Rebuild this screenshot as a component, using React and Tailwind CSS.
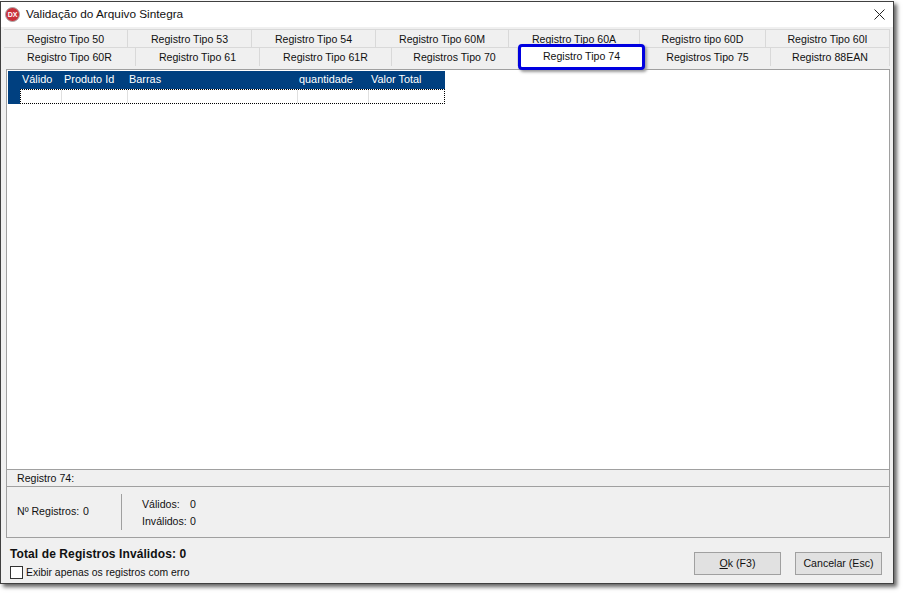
const font = { fontFamily: '"Liberation Sans", Arial, sans-serif' };

const rowOne = [
  ["Registro Tipo 50", 124],
  ["Registro Tipo 53", 124],
  ["Registro Tipo 54", 124],
  ["Registro Tipo 60M", 133],
  ["Registro Tipo 60A", 131],
  ["Registro tipo 60D", 126],
  ["Registro Tipo 60I", 124],
];

const rowTwo = [
  ["Registro Tipo 60R", 132],
  ["Registro Tipo 61", 124],
  ["Registro Tipo 61R", 132],
  ["Registros Tipo 70", 126],
  ["Registro Tipo 74", 127, true],
  ["Registros Tipo 75", 126],
  ["Registro 88EAN", 119],
];

const columns = [
  ["Válido", "w-[42px]"],
  ["Produto Id", "w-[65px]"],
  ["Barras", "w-[170px]"],
  ["quantidade", "w-[72px]"],
  ["Valor Total", "w-[74px]"],
];

function Tab({ label, width, selected }) {
  if (selected) {
    return (
      <div
        className="relative z-10 -mt-[3px] h-[26px] shrink-0 rounded-[4px] border-[3px] border-[#0000e0] bg-white pt-[2px] text-center leading-[14px] shadow-[2px_2px_3px_#999]"
        style={{ width }}
      >
        {label}
      </div>
    );
  }
  return (
    <div
      className="h-[19px] shrink-0 border-t border-r border-[#d9d9d9] text-center leading-[18px]"
      style={{ width }}
    >
      {label}
    </div>
  );
}

export default function App() {
  return (
    <div className="h-[594px] w-[904px] overflow-hidden bg-white pt-[1px] text-[10.6px] text-[#111]" style={font}>
      <div className="flex h-[583px] w-[894px] flex-col border border-[#404040] shadow-[3px_3px_4px_#666]">
        <div className="flex h-[25px] shrink-0 items-center bg-white pl-[4px] pr-[8px]">
          <svg width="15" height="15" viewBox="0 0 15 15">
            <circle cx="7.5" cy="7.5" r="7" fill="#c9303a" stroke="#a9a9a9" />
            <text x="7.5" y="10" textAnchor="middle" fontSize="7" fontWeight="700" fill="#fff">DX</text>
          </svg>
          <span className="ml-[6px] text-[11.8px]">Validação do Arquivo Sintegra</span>
          <svg className="ml-auto" width="11" height="11" viewBox="0 0 11 11">
            <path d="M0.5 0.5 L10.5 10.5 M10.5 0.5 L0.5 10.5" stroke="#222" strokeWidth="1" fill="none" />
          </svg>
        </div>

        <div className="flex min-h-0 flex-1 flex-col bg-[#f0f0f0] pl-[3px] pr-[3px]">
          <div className="mt-[2px] flex h-[18px] shrink-0">
            {rowOne.map(([label, width]) => (
              <Tab key={label} label={label} width={width} />
            ))}
          </div>
          <div className="flex h-[19px] shrink-0">
            {rowTwo.map(([label, width, selected]) => (
              <Tab key={label} label={label} width={width} selected={selected} />
            ))}
          </div>

          <div className="ml-[2px] mt-[3px] flex h-[469px] w-[884px] shrink-0 flex-col border border-[#a0a0a0]">
            <div className="min-h-0 flex-1 bg-white pl-[1px] pt-[1px]">
              <div className="w-[437px]">
                <div className="flex h-[18px] items-center bg-[#004080] pb-[2px] pl-[14px] text-[10.9px] text-white">
                  {columns.map(([label, width]) => (
                    <span key={label} className={width}>{label}</span>
                  ))}
                </div>
                <div className="flex h-[15px] bg-[#004080]">
                  <div className="w-[12px]" />
                  <div className="flex flex-1 border border-dotted border-black bg-white">
                    <div className="w-[41px] border-r border-[#e0e0e0]" />
                    <div className="w-[66px] border-r border-[#e0e0e0]" />
                    <div className="w-[170px] border-r border-[#e0e0e0]" />
                    <div className="w-[71px] border-r border-[#e0e0e0]" />
                  </div>
                </div>
              </div>
            </div>

            <div className="h-[18px] shrink-0 border-y border-[#a0a0a0] bg-[#f0f0f0] pl-[10px] leading-[17px]">Registro 74:</div>

            <div className="flex h-[50px] shrink-0 items-center bg-[#f0f0f0] pl-[10px]">
              <span className="w-[66px]">Nº Registros:</span>
              <span className="w-[38px]">0</span>
              <div className="h-[36px] w-px bg-[#a0a0a0]" />
              <div className="ml-[20px] flex flex-col gap-[3px] leading-[14px]">
                <div className="flex"><span className="w-[48px]">Válidos:</span><span>0</span></div>
                <div className="flex"><span className="w-[48px]">Inválidos:</span><span>0</span></div>
              </div>
            </div>
          </div>

          <div className="flex min-h-0 flex-1 items-start justify-between pl-[6px] pr-[8px]">
            <div className="flex flex-col gap-[4px] pt-[9px]">
              <span className="text-[12px] font-bold leading-[14px] tracking-[0.1px]">Total de Registros Inválidos: 0</span>
              <label className="flex items-center gap-[3px] text-[10.4px]">
                <span className="h-[13px] w-[13px] border border-[#333] bg-white" />
                <span>Exibir apenas os registros com erro</span>
              </label>
            </div>
            <div className="flex gap-[14px] pt-[14px]">
              <button className="h-[23px] w-[87px] border border-[#a0a0a0] bg-[#e1e1e1]"><u>O</u>k (F3)</button>
              <button className="h-[23px] w-[87px] border border-[#a0a0a0] bg-[#e1e1e1]">Cancelar (Esc)</button>
            </div>
          </div>
        </div>
      </div>
    </div>
  );
}
